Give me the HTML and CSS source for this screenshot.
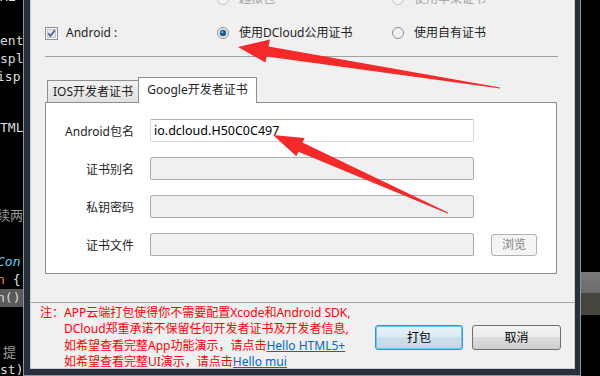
FILE: index.html
```html
<html>

<head>
    <meta charset="UTF-8">
    <title>云端打包</title>
    <link rel="stylesheet" href="styles.css">
</head>

<body>
    <div class="screen">
        <div class="code">
            <div class="ln first">ML</div>
            <div class="sp26"></div>
            <div class="ln">ent</div>
            <div class="ln">spl</div>
            <div class="ln"><span class="cut">isp</span></div>
            <div class="sp33"></div>
            <div class="ln">TML</div>
            <div class="sp69"></div>
            <div class="ln gray"><span class="cut">续两</span></div>
            <div class="sp29"></div>
            <div class="ln cyan"><span class="cut">Con</span></div>
            <div class="ln"><span class="cut"><span class="orange">n</span> {</span></div>
            <div class="ln hl"><span class="cut">n()</span></div>
            <div class="sp36"></div>
            <div class="ln gray">&nbsp;提</div>
            <div class="ln">st)</div>
        </div>

        <div class="win">
            <div class="dlg">
                <div class="opts top">
                    <div></div>
                    <div class="opt off">
                        <svg class="radio" width="12" height="12" viewBox="0 0 12 12"><circle cx="6" cy="6" r="5.5" fill="#f4f4f4" stroke="#c2c2c2"/></svg>
                        <span>越狱包</span>
                    </div>
                    <div class="opt off">
                        <svg class="radio" width="12" height="12" viewBox="0 0 12 12"><circle cx="6" cy="6" r="5.5" fill="#f4f4f4" stroke="#c2c2c2"/></svg>
                        <span>使用苹果证书</span>
                    </div>
                </div>
                <div class="opts">
                    <div class="opt check">
                        <svg width="13" height="13" viewBox="0 0 13 13">
                            <rect x="0.5" y="0.5" width="12" height="12" fill="#f6f6f6" stroke="#8e8f8f"/>
                            <rect x="2.5" y="2.5" width="8" height="8" fill="#e4e8ee" stroke="#c3c9d1"/>
                            <path d="M3.2 6.4 L5.4 9 L9.8 3.4" stroke="#4b5f95" stroke-width="1.7" fill="none"/>
                        </svg>
                        <span>Android :</span>
                    </div>
                    <div class="opt">
                        <svg class="radio" width="12" height="12" viewBox="0 0 12 12">
                            <circle cx="6" cy="6" r="5.5" fill="#ececec" stroke="#8e8f8f"/>
                            <circle cx="6" cy="6" r="3.2" fill="#1d5c93"/>
                            <circle cx="5.2" cy="5.1" r="1.2" fill="#7fb6e3"/>
                        </svg>
                        <span>使用DCloud公用证书</span>
                    </div>
                    <div class="opt">
                        <svg class="radio" width="12" height="12" viewBox="0 0 12 12"><circle cx="6" cy="6" r="5.5" fill="#f0f0f0" stroke="#8e8f8f"/></svg>
                        <span>使用自有证书</span>
                    </div>
                </div>

                <div class="sep"></div>

                <div class="tabs">
                    <div class="tab">IOS开发者证书</div>
                    <div class="tab active">Google开发者证书</div>
                </div>
                <div class="panel">
                    <div class="lbl">Android包名</div>
                    <div class="field">io.dcloud.H50C0C497</div>
                    <div class="lbl">证书别名</div>
                    <div class="field off"></div>
                    <div class="lbl">私钥密码</div>
                    <div class="field off"></div>
                    <div class="lbl">证书文件</div>
                    <div class="field off"></div>
                    <div class="browse">浏览</div>
                </div>

                <div class="foot">
                    <div class="note">
                        <span>注：</span>
                        <div class="lines">
                            <div>APP云端打包使得你不需要配置Xcode和Android SDK,</div>
                            <div>DCloud郑重承诺不保留任何开发者证书及开发者信息,</div>
                            <div>如希望查看完整App功能演示，请点击<a href="#">Hello HTML5+</a></div>
                            <div>如希望查看完整UI演示，请点击<a href="#">Hello mui</a></div>
                        </div>
                    </div>
                    <div class="actions">
                        <div class="btn def">打包</div>
                        <div class="btn">取消</div>
                    </div>
                </div>
            </div>
        </div>

        <div class="side">
            <div class="thumb"></div>
        </div>

        <svg class="arrows" width="600" height="376" viewBox="0 0 600 376">
            <polygon fill="#f5282a" points="238,47 270,39.5 268.6,46.4 500,87.6 500,88.4 266.8,56.4 265.4,62.5"/>
            <polygon fill="#f5282a" points="273,135 304.5,138.1 302.4,142.6 448,212.6 447.6,213.4 298.4,151.8 296.3,156.3"/>
        </svg>
    </div>
</body>

</html>
```

FILE: styles.css
```css
* {
    box-sizing: border-box;
}

body {
    margin: 0;
    background: #000;
    font-family: "Noto Sans", "Noto Sans CJK SC", sans-serif;
    font-size: 12px;
    color: #1e1e1e;
}

.screen {
    position: relative;
    display: flex;
    width: 600px;
    height: 376px;
    overflow: hidden;
}

/* editor behind the dialog */
.code {
    width: 23px;
    flex: none;
    overflow: hidden;
    font-family: "DejaVu Sans Mono", monospace;
    font-size: 13px;
    color: #dcdcdc;
    white-space: nowrap;
}

.code .ln {
    height: 18px;
    line-height: 18px;
}

.code .first {
    margin-top: -12px;
}

.code .cut {
    margin-left: -3px;
}

.code .gray {
    color: #9a9a9a;
    font-family: "Noto Sans CJK SC", sans-serif;
}

.code .cyan {
    color: #5fd4f0;
    font-style: italic;
}

.code .orange {
    color: #f08c2a;
}

.code .hl {
    background: #5a5a5a;
}

.sp26 { height: 26px; }
.sp33 { height: 33px; }
.sp69 { height: 69px; }
.sp29 { height: 29px; }
.sp36 { height: 36px; }

/* window frame */
.win {
    width: 558px;
    flex: none;
    height: 376px;
    display: flex;
    background: #27303a;
    border: 1px solid #8a96a2;
    border-top: none;
    padding: 0 5px 6px 6px;
}

.dlg {
    flex: 1;
    display: flex;
    flex-direction: column;
    background: #f0f0f0;
    border: 1px solid #c6ced6;
    border-top: none;
    overflow: hidden;
}

.opts {
    display: grid;
    grid-template-columns: 172px 175px 1fr;
    height: 22px;
    margin-top: 12px;
    padding-left: 14px;
}

.opts.top {
    margin-top: -12px;
}

.opt {
    display: flex;
    align-items: center;
    gap: 10px;
    line-height: 22px;
}

.opt.check {
    gap: 8px;
}

.opt.off {
    color: #a3a3a3;
}

.sep {
    margin: 12px 16px 0 14px;
    border-top: 1px solid #a0a0a0;
}

.tabs {
    display: flex;
    align-items: flex-end;
    height: 25px;
    margin: 20px 0 0 16px;
}

.tab {
    width: 91px;
    height: 22px;
    line-height: 21px;
    text-align: center;
    border: 1px solid #8e8f8f;
    border-bottom: none;
    border-right: none;
    background: linear-gradient(#f2f2f2, #e1e1e1);
}

.tab.active {
    position: relative;
    z-index: 1;
    width: 119px;
    height: 26px;
    line-height: 24px;
    margin-bottom: -1px;
    border-right: 1px solid #8e8f8f;
    background: #fff;
}

.panel {
    display: grid;
    grid-template-columns: 88px 324px 47px;
    grid-auto-rows: 23px;
    column-gap: 16px;
    row-gap: 15px;
    align-items: center;
    margin: 0 17px 0 14px;
    padding: 16px 0 17px 0;
    background: #fff;
    border: 1px solid #8e8f8f;
}

.lbl {
    grid-column: 1;
    text-align: right;
}

.field {
    height: 23px;
    line-height: 21px;
    padding-left: 3px;
    font-size: 12.5px;
    color: #000;
    background: #fff;
    border: 1px solid #d3d9e1;
    border-top-color: #abb1b9;
    border-radius: 2px;
}

.field.off {
    background: #f0f0f0;
    border: 1px solid #acacac;
}

.browse {
    height: 22px;
    line-height: 20px;
    margin-left: 1px;
    text-align: center;
    color: #838383;
    background: #f4f4f4;
    border: 1px solid #adb2b5;
    border-radius: 3px;
}

.foot {
    flex: 1;
    display: flex;
    margin-top: 28px;
    padding: 2px 13px 0 9px;
    border-top: 1px solid #a0a0a0;
}

.note {
    display: flex;
    color: #ff0000;
    line-height: 16.3px;
    white-space: nowrap;
}

.note a {
    color: #0066cc;
    text-decoration: underline;
}

.actions {
    display: flex;
    gap: 9px;
    margin-left: auto;
    margin-top: 20px;
    align-self: flex-start;
}

.btn {
    width: 89px;
    height: 25px;
    line-height: 23px;
    text-align: center;
    color: #000;
    border: 1px solid #707070;
    border-radius: 3px;
    background: linear-gradient(#f2f2f2 0, #ebebeb 45%, #dddddd 50%, #cfcfcf 100%);
}

.btn.def {
    width: 88px;
    border-color: #3c8fc9;
    box-shadow: inset 0 0 0 1px #5fd0f4;
    background: linear-gradient(#e6f1f8 0, #dcebf4 45%, #cde0eb 50%, #c2d7e4 100%);
}

.side {
    flex: 1;
    background: #000;
}

.thumb {
    margin-top: 272px;
    height: 43px;
    background: linear-gradient(#7a7a7a 0, #6a6a6a 50%, #45453d 50%, #45453d 100%);
}

.arrows {
    position: absolute;
    left: 0;
    top: 0;
    pointer-events: none;
}
```
